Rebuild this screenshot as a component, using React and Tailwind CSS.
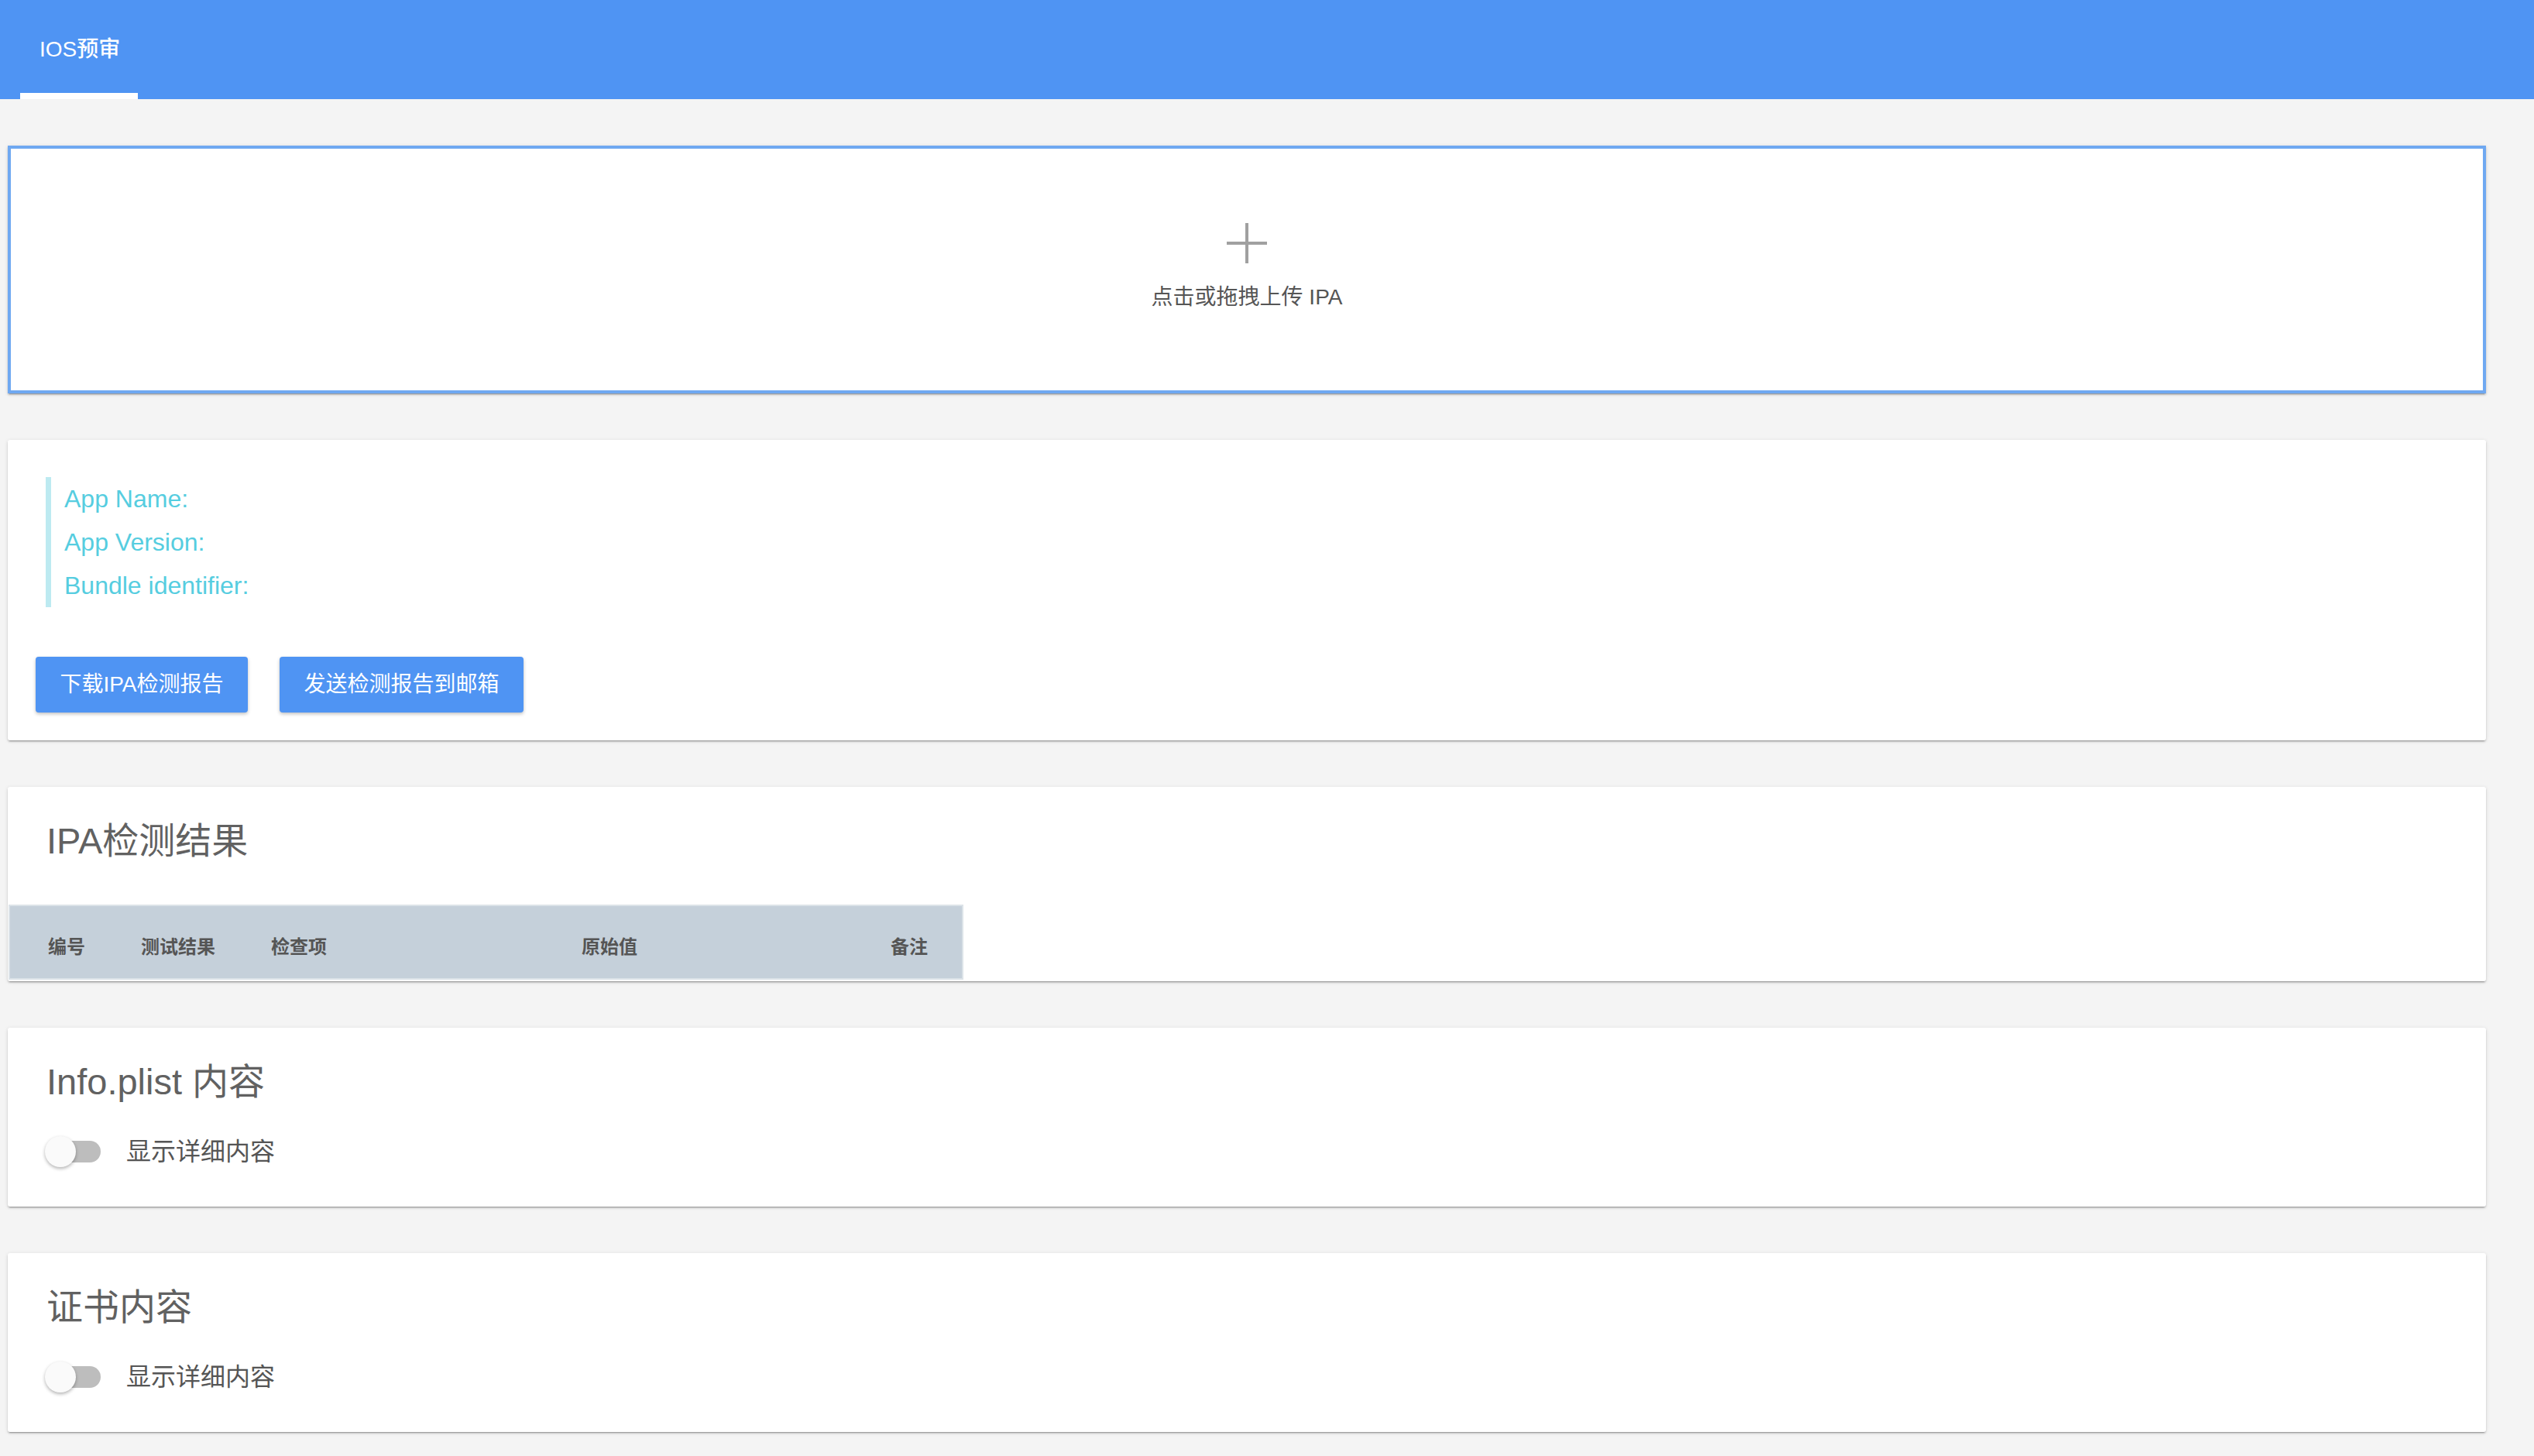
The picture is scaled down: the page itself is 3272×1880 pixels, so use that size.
import React, { useState } from 'react';

const FONT = { fontFamily: '"Liberation Sans", "Noto Sans CJK SC", sans-serif' };

const CARD_SHADOW =
  'shadow-[0_2px_2px_0_rgba(0,0,0,0.14),0_3px_1px_-2px_rgba(0,0,0,0.2),0_1px_5px_0_rgba(0,0,0,0.12)]';

// Material-ish toggle switch
const Toggle = ({ checked, onChange }) => (
  <button
    onClick={() => onChange(!checked)}
    className="relative w-[72px] h-[40px] flex items-center shrink-0"
  >
    <span
      className={
        'absolute left-[2px] right-0 h-[28px] rounded-full ' +
        (checked ? 'bg-[#a9c9f7]' : 'bg-[#bdbdbd]')
      }
    />
    <span
      className={
        'absolute top-0 w-[40px] h-[40px] rounded-full shadow-[0_2px_4px_rgba(0,0,0,0.3)] transition-all ' +
        (checked ? 'left-[32px] bg-[#4f94f3]' : 'left-0 bg-[#fafafa]')
      }
    />
  </button>
);

const Card = ({ children, className = '' }) => (
  <div className={'bg-white rounded-[3px] ' + CARD_SHADOW + ' ' + className}>{children}</div>
);

const DetailSection = ({ title }) => {
  const [show, setShow] = useState(false);
  return (
    <Card className="pt-[40px] pb-[51px] pl-[48px]">
      <h2 className="text-[47px] leading-[60px] text-[#616161] pl-[2px]">{title}</h2>
      <div className="flex items-center mt-[40px]">
        <Toggle checked={show} onChange={setShow} />
        <span className="ml-[33px] text-[32px] leading-[40px] text-[#555]">显示详细内容</span>
      </div>
    </Card>
  );
};

export default function App() {
  const columns = [
    { label: '编号', w: 'w-[169px] pl-[49px]' },
    { label: '测试结果', w: 'w-[168px]' },
    { label: '检查项', w: 'w-[401px]' },
    { label: '原始值', w: 'w-[399px]' },
    { label: '备注', w: 'w-[96px]' },
  ];

  return (
    <div className="min-h-screen bg-[#f4f4f4]" style={FONT}>
      {/* top bar */}
      <header className="h-[128px] bg-[#4f94f3] flex pl-[26px]">
        <div className="relative h-full w-[152px] flex items-center pl-[25px]">
          <span className="text-white text-[28px] leading-none font-medium">IOS预审</span>
          <span className="absolute left-0 bottom-0 w-full h-[8px] bg-white" />
        </div>
      </header>

      <main className="pl-[10px] pr-[62px] pt-[60px] pb-[29px] flex flex-col gap-[60px]">
        {/* upload area */}
        <div
          className={
            'h-[320px] bg-white border-[4px] border-[#6fa8f1] flex flex-col items-center pt-[96px] cursor-pointer ' +
            CARD_SHADOW
          }
        >
          <svg width="52" height="52" viewBox="0 0 52 52">
            <path d="M26 0V52M0 26H52" stroke="#a0a0a0" strokeWidth="4" />
          </svg>
          <p className="mt-[24px] text-[28px] leading-[40px] text-[#555]">点击或拖拽上传 IPA</p>
        </div>

        {/* app info */}
        <Card className="pt-[48px] pb-[36px] pl-[36px]">
          <div className="ml-[13px] border-l-[7px] border-[#bdeaf1] pl-[17px] text-[32px] leading-[56px] text-[#56cde0]">
            <p>App Name:</p>
            <p>App Version:</p>
            <p>Bundle identifier:</p>
          </div>
          <div className="flex gap-[41px] mt-[64px]">
            <button className="h-[72px] w-[274px] rounded-[4px] bg-[#4f94f3] text-white text-[28px] shadow-[0_2px_4px_rgba(0,0,0,0.25)]">
              下载IPA检测报告
            </button>
            <button className="h-[72px] w-[315px] rounded-[4px] bg-[#4f94f3] text-white text-[28px] shadow-[0_2px_4px_rgba(0,0,0,0.25)]">
              发送检测报告到邮箱
            </button>
          </div>
        </Card>

        {/* results */}
        <Card className="pt-[40px] pb-[2px]">
          <h2 className="text-[47px] leading-[60px] text-[#616161] pl-[50px]">IPA检测结果</h2>
          <div className="mt-[52px] ml-[1px] w-[1233px] h-[97px] bg-[#c5d0da] border-[2px] border-[#dce3e8] flex items-center pt-[12px]">
            {columns.map((c) => (
              <div key={c.label} className={c.w + ' text-[24px] font-bold text-[#555] shrink-0'}>
                {c.label}
              </div>
            ))}
          </div>
        </Card>

        <DetailSection title="Info.plist 内容" />
        <DetailSection title="证书内容" />
      </main>
    </div>
  );
}
